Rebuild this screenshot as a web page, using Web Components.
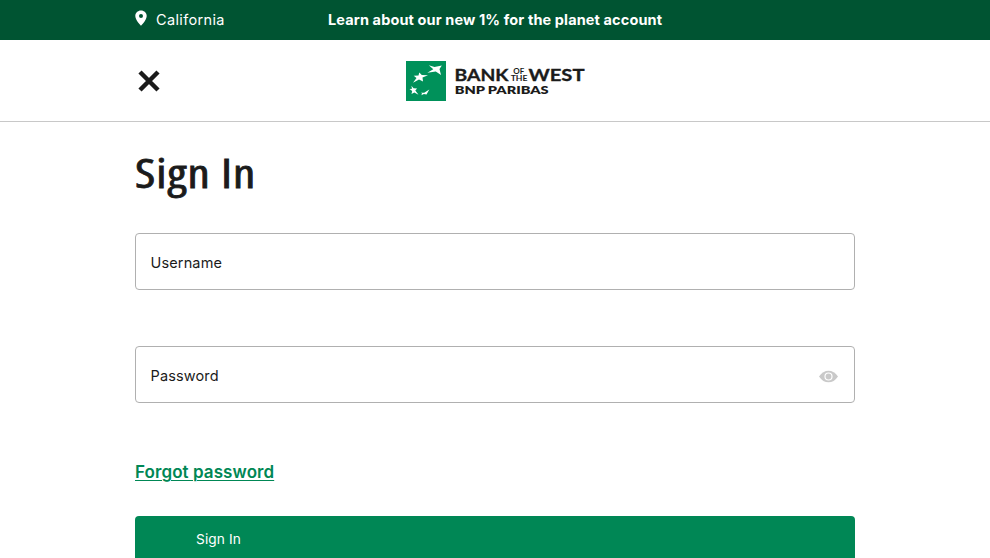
<!DOCTYPE html>
<html lang="en"><head><meta charset="utf-8"><title>Sign In</title>
<style>body{margin:0;background:#fff;color:#1b1b1b;font:14.5px/20px Inter,"Liberation Sans",sans-serif;height:558px;overflow:hidden}</style></head><body>
<template id="promo-bar"><style>
:host{display:block;height:40px;background:#005432;color:#fff}
.in{width:720px;height:40px;margin:auto;display:grid;grid-template-columns:193px 1fr;align-items:center}
.loc{display:flex;align-items:center;gap:9px;letter-spacing:.35px}
svg{display:block;margin-top:-4px}
b{font-weight:700;letter-spacing:.12px;white-space:nowrap}
</style><div class="in"><div class="loc"><svg width="12" height="16" viewBox="0 0 12 16"><path fill="#fff" fill-rule="evenodd" d="M6 .5C2.8.5.3 2.9.3 6c0 4.2 5.7 9.7 5.7 9.7S11.7 10.200 11.700 6C11.700 2.900 9.200.5 6 .5ZM6 4a2 2 0 1 1 0 4a2 2 0 0 1 0-4Z"/></svg><slot name="place"></slot></div><b><slot></slot></b></div></template>

<template id="brand-logo"><style>:host{display:block;height:42px}svg{display:block}text{font-family:Lato,"Open Sans",sans-serif;font-weight:700;fill:#1b1b1b}.lg{stroke:#1b1b1b;stroke-width:.35px}.sm{font-weight:700}</style>
<svg width="180" height="42" viewBox="0 0 180 42"><rect y="1" width="40" height="40" fill="#00915a"/>
<g fill="#fff"><path d="M22.800 5.200 28.500 7 35.800 5.500 33.500 9 35 15 29.800 11.500 21.300 12.700 27.300 9.300Z"/>
<path d="M13.300 12.500 15.800 15 22 15.300 16.500 17.600 17 21.500 13 19.500 7 22.700 10.500 18 7.700 15.800 12.500 15.500Z"/>
<path d="M5.400 25.800 7.600 28.200 11.100 28.500 9.300 30.500 12.500 34.700 8.300 32.500 5.500 34 6.200 31 3.500 29 6 28.700Z"/>
<path d="M23.300 29.500 20.500 34.500 17.900 34.100 15.300 35.200 16.100 33.500 14.900 32.700 18.200 32.700Z"/></g>
<text class="lg" x="48.500" y="21" font-size="17.500" textLength="54" lengthAdjust="spacingAndGlyphs">BANK</text>
<text class="sm" x="107.300" y="14.200" font-size="7" textLength="11" lengthAdjust="spacingAndGlyphs">OF</text>
<text class="sm" x="104.700" y="21" font-size="7.400" textLength="16.800" lengthAdjust="spacingAndGlyphs">THE</text>
<text class="lg" x="122.500" y="21" font-size="17.500" textLength="56" lengthAdjust="spacingAndGlyphs">WEST</text>
<text x="48.700" y="33.800" font-size="11.900" textLength="94" lengthAdjust="spacingAndGlyphs" style="font-weight:800">BNP PARIBAS</text></svg></template>

<template id="site-header"><style>:host{display:block;height:81px;border-bottom:1px solid #c8c8c8}
.in{width:720px;height:81px;margin:auto;display:grid;grid-template-columns:271px 1fr;align-items:center}
svg{display:block;margin-left:3px}</style><div class="in"><svg width="22" height="22" viewBox="0 0 22 22"><path d="m2 2 18 18M20 2 2 20" stroke="#1b1b1b" stroke-width="4.500"/></svg><slot></slot></div></template>

<template id="form-field"><style>:host{display:flex;box-sizing:border-box;height:57px;border:1px solid #b0b0b0;border-radius:4px;padding:2px 16px 0 14.5px;align-items:center;justify-content:space-between}
span{letter-spacing:.14px}</style><span><slot></slot></span><slot name="action"></slot></template>
<template id="eye-icon"><style>:host{display:block}svg{display:block;margin-top:1px}</style><svg width="19" height="13" viewBox="0 0 19 13"><path fill="#c9c9c9" d="M0 6.500C5-1.300 14-1.300 19 6.500 14 14.300 5 14.300 0 6.500Z"/><circle cx="9.500" cy="6.500" r="3.500" fill="#c9c9c9" stroke="#fff" stroke-width="1.200"/></svg></template>

<template id="sign-in-panel"><style>:host{display:block;width:720px;margin:0 auto;padding-top:23px}
h1{font:500 40px/56px "Open Sans",sans-serif;font-stretch:75%;letter-spacing:.8px;margin:0 0 32px;height:56px;width:max-content;white-space:nowrap;transform:scaleX(1.235);transform-origin:0 0;-webkit-text-stroke:.8px #1b1b1b}
.fields{display:grid;gap:56px}
a{display:block;width:max-content;margin-top:57px;color:#008755;font-size:17px;font-weight:600;line-height:24px;letter-spacing:.08px;text-decoration:underline;text-decoration-thickness:1px;text-underline-offset:2px}
button{display:block;width:100%;height:56px;margin-top:32px;border:0;border-radius:4px;background:#008755;color:#fff;font:13.7px/20px Inter,sans-serif;letter-spacing:.12px;text-align:left;padding:0 61px 11px}
</style><h1>Sign In</h1><div class="fields"><slot></slot></div><a>Forgot password</a><button>Sign In</button></template>

<promo-bar><span slot="place">California</span>Learn about our new 1% for the planet account</promo-bar>
<site-header><brand-logo></brand-logo></site-header>
<sign-in-panel><form-field>Username</form-field><form-field>Password<eye-icon slot="action"></eye-icon></form-field></sign-in-panel>
<script>
for(const name of ['promo-bar','brand-logo','site-header','form-field','eye-icon','sign-in-panel']){
customElements.define(name,class extends HTMLElement{constructor(){super();this.attachShadow({mode:'open'}).append(document.getElementById(name).content.cloneNode(true))}})}
</script></body></html>
